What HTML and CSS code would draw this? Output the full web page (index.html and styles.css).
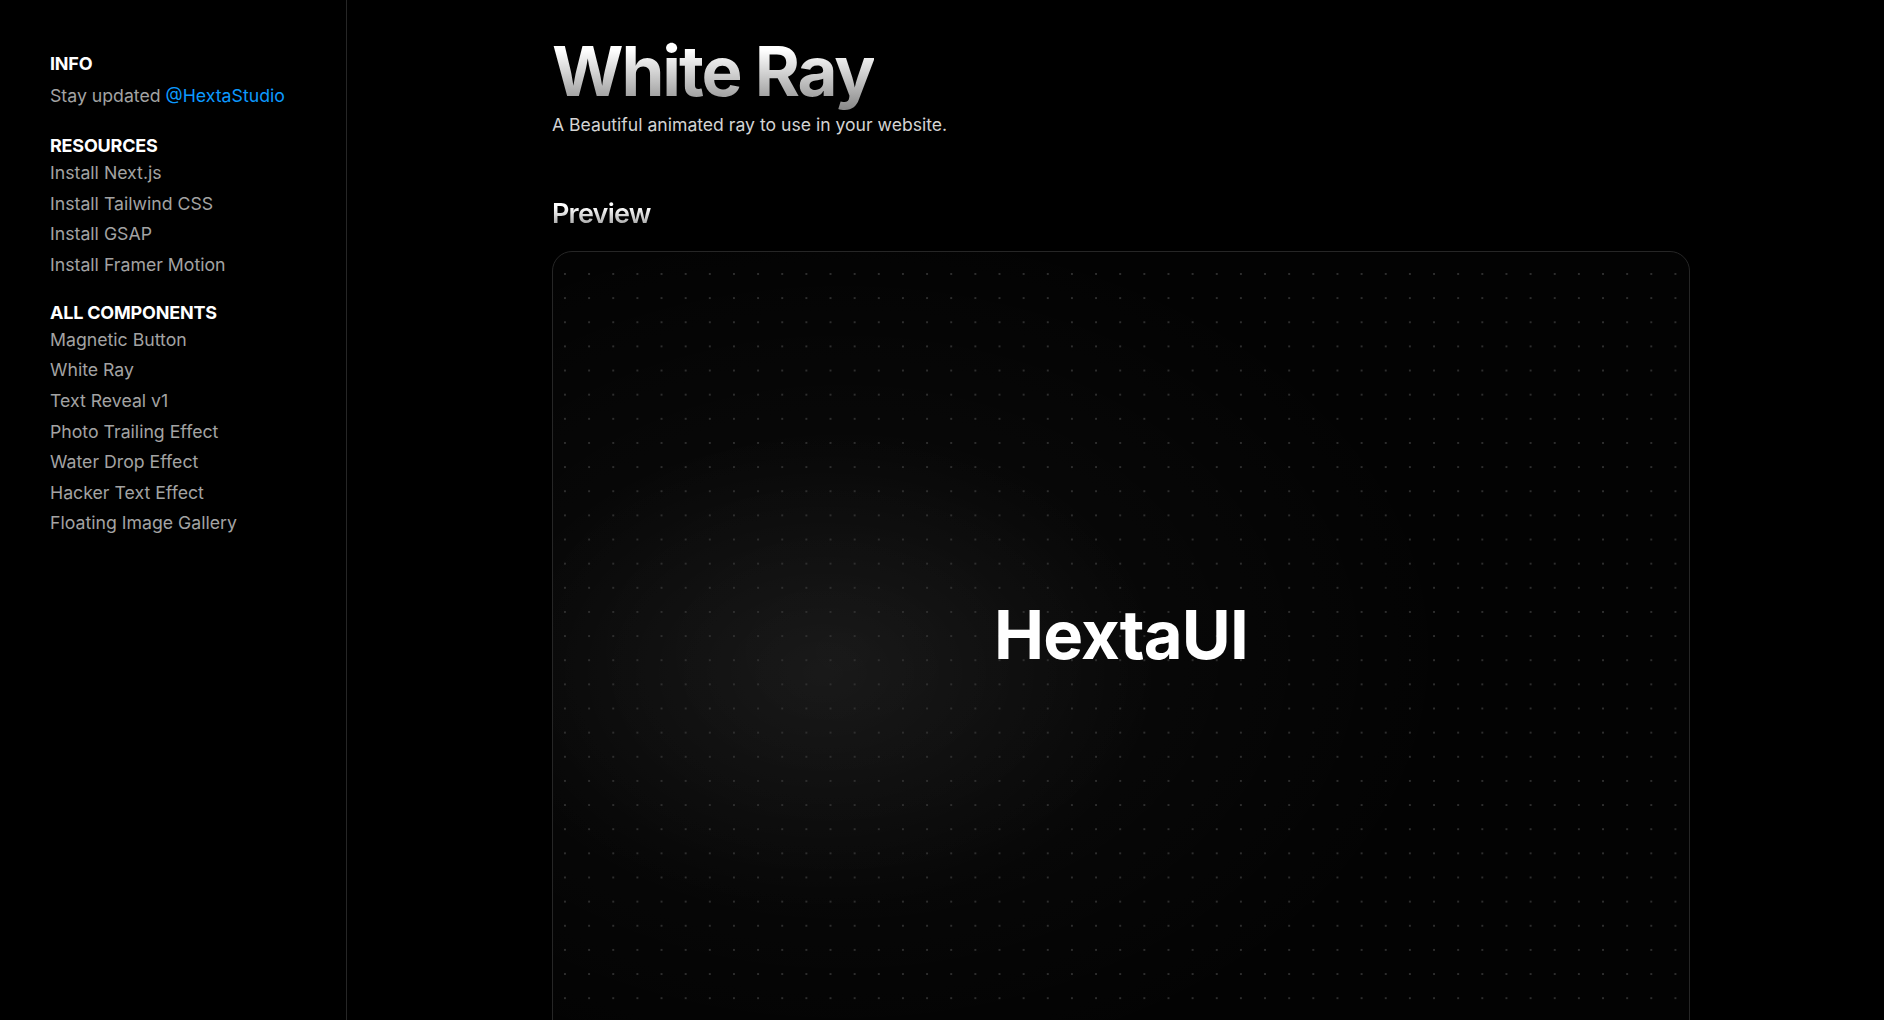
FILE: index.html
```html
<!DOCTYPE html>
<html lang="en">
<head>
<meta charset="utf-8">
<title>White Ray - HextaUI</title>
<link rel="stylesheet" href="styles.css">
</head>
<body>
<div class="layout">
  <aside class="sidebar">
    <section class="group group-info">
      <h3 class="group-title">INFO</h3>
      <p class="info-line">Stay updated <a class="link" href="#">@HextaStudio</a></p>
    </section>
    <section class="group group-resources">
      <h3 class="group-title">RESOURCES</h3>
      <ul class="nav">
        <li><a href="#">Install Next.js</a></li>
        <li><a href="#">Install Tailwind CSS</a></li>
        <li><a href="#">Install GSAP</a></li>
        <li><a href="#">Install Framer Motion</a></li>
      </ul>
    </section>
    <section class="group group-components">
      <h3 class="group-title">ALL COMPONENTS</h3>
      <ul class="nav">
        <li><a href="#">Magnetic Button</a></li>
        <li><a href="#">White Ray</a></li>
        <li><a href="#">Text Reveal v1</a></li>
        <li><a href="#">Photo Trailing Effect</a></li>
        <li><a href="#">Water Drop Effect</a></li>
        <li><a href="#">Hacker Text Effect</a></li>
        <li><a href="#">Floating Image Gallery</a></li>
      </ul>
    </section>
  </aside>
  <main class="main">
    <div class="content">
      <h1 class="title">White Ray</h1>
      <p class="subtitle">A Beautiful animated ray to use in your website.</p>
      <h2 class="section-title">Preview</h2>
      <div class="preview">
        <div class="ray"></div>
        <div class="dots"></div>
        <span class="brand">HextaUI</span>
      </div>
    </div>
  </main>
</div>
</body>
</html>
```
FILE: styles.css
```css
* { box-sizing: border-box; }
html, body {
  margin: 0;
  padding: 0;
  background: #000;
  height: 100%;
  overflow: hidden;
}
body {
  font-family: Inter, "Noto Sans", sans-serif;
  color: #fff;
}
.layout {
  display: flex;
  height: 100vh;
}
.sidebar {
  width: 347px;
  flex-shrink: 0;
  border-right: 1px solid #262626;
  padding: 52px 0 0 50px;
  display: flex;
  flex-direction: column;
}
.group-resources {
  margin-top: 25px;
}
.group-components {
  margin-top: 20.5px;
}
.group-title {
  margin: 0;
  font-size: 18px;
  font-weight: 700;
  line-height: 24px;
  color: #fff;
  letter-spacing: -0.2px;
}
.info-line {
  margin: 7px 0 0;
  font-size: 17.7px;
  line-height: 26px;
  color: #a3a3a3;
}
.link {
  color: #0c9aff;
  text-decoration: none;
}
.nav {
  list-style: none;
  margin: 0;
  padding: 0;
}
.nav li {
  font-size: 17.7px;
  line-height: 30.6px;
}
.nav a {
  color: #a3a3a3;
  text-decoration: none;
}
.main {
  flex: 1;
  min-width: 0;
}
.content {
  width: 1138px;
  margin-left: 205px;
  padding-top: 29px;
}
.title {
  margin: 0;
  font-size: 69px;
  font-weight: 700;
  line-height: 84px;
  letter-spacing: -2.1px;
  background: linear-gradient(to bottom, #ffffff 25%, #8a8a8a 95%);
  -webkit-background-clip: text;
  background-clip: text;
  color: transparent;
  display: inline-block;
}
.subtitle {
  margin: 0;
  font-size: 17.6px;
  line-height: 24px;
  color: #d4d4d4;
}
.section-title {
  margin: 60px 0 0;
  font-size: 27px;
  font-weight: 600;
  line-height: 34px;
  letter-spacing: -0.8px;
  background: linear-gradient(to bottom, #ffffff 30%, #9a9a9a 90%);
  -webkit-background-clip: text;
  background-clip: text;
  color: transparent;
  display: inline-block;
}
.preview {
  position: relative;
  margin-top: 20px;
  height: 790px;
  border: 1px solid #262626;
  border-radius: 20px;
  overflow: hidden;
  background: #030303;
  display: flex;
  align-items: center;
  justify-content: center;
  padding-bottom: 24px;
}
.ray {
  position: absolute;
  inset: 0;
  background:
    radial-gradient(ellipse 340px 240px at 270px 420px, rgba(255,255,255,0.06), rgba(255,255,255,0) 100%),
    radial-gradient(ellipse 620px 440px at 290px 400px, rgba(255,255,255,0.035), rgba(255,255,255,0) 100%);
}
.dots {
  position: absolute;
  inset: 0;
  background-image: radial-gradient(circle at 1px 1px, #2e2e2e 1.2px, transparent 1.4px);
  background-size: 24.15px 24.15px;
  background-position: 11px 21px;
}
.brand {
  position: relative;
  font-size: 67px;
  font-weight: 700;
  letter-spacing: -0.9px;
  color: #fff;
  line-height: 1;
}
```
